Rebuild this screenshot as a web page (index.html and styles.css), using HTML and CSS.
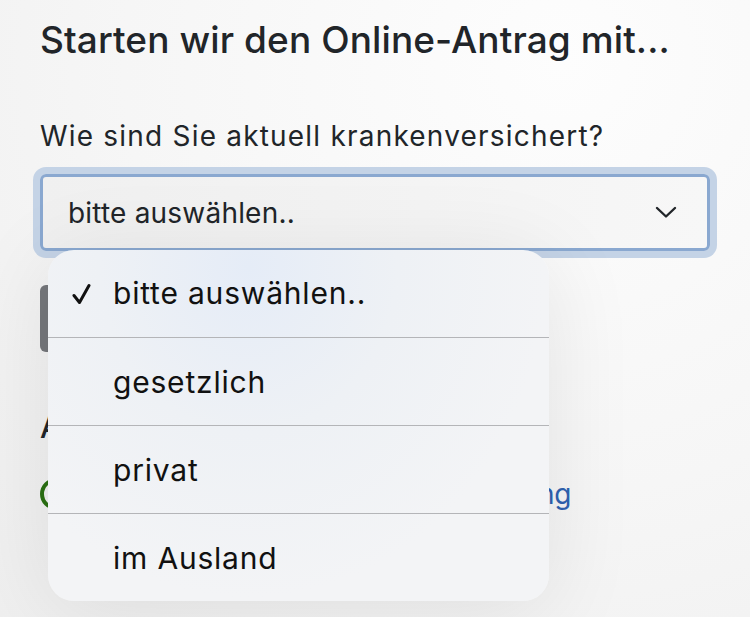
FILE: index.html
```html
<!DOCTYPE html>
<html lang="de">
<head>
    <meta charset="UTF-8">
    <title>Online-Antrag</title>
    <link rel="stylesheet" href="styles.css">
</head>
<body>
<div class="page">
    <h1 class="title">Starten wir den Online-Antrag mit...</h1>

    <div class="field">
        <label class="field-label" for="kv">Wie sind Sie aktuell krankenversichert?</label>
        <div class="select">
            <span class="select-value">bitte auswählen..</span>
            <svg class="chevron" width="22" height="13" viewBox="0 0 22 13">
                <path d="M2 2 L11 10.5 L20 2" fill="none" stroke="#212529" stroke-width="2.4" stroke-linecap="round" stroke-linejoin="round"/>
            </svg>
        </div>

        <!-- geöffnetes Auswahlmenü -->
        <ul class="picker">
            <li class="picker-item selected">
                <svg class="check" width="19" height="22" viewBox="0 0 19 22">
                    <path d="M2 12.5 L7.5 19.5 L17 2.5" fill="none" stroke="#111" stroke-width="3" stroke-linecap="round" stroke-linejoin="round"/>
                </svg>
                bitte auswählen..
            </li>
            <li class="picker-item">gesetzlich</li>
            <li class="picker-item">privat</li>
            <li class="picker-item">im Ausland</li>
        </ul>
    </div>

    <button class="btn">Weiter</button>

    <h2 class="subtitle">Alternativ</h2>

    <div class="help-row">
        <span class="help-icon"></span>
        <a class="help-link" href="#">Hier finden Sie die Infos zur Beratung</a>
    </div>
</div>
</body>
</html>
```

FILE: styles.css
```css
* {
    margin: 0;
    padding: 0;
    box-sizing: border-box;
}

body {
    font-family: Inter, "Liberation Sans", sans-serif;
    color: #212529;
    background: radial-gradient(ellipse at 75% 10%, #fdfdfd 0%, #f6f6f6 55%, #efefef 100%);
    height: 617px;
    overflow: hidden;
}

.page {
    padding: 14px 40px 0 40px;
}

.title {
    font-size: 37px;
    font-weight: 500;
    letter-spacing: 0.1px;
    line-height: 52px;
}

.field {
    position: relative;
    margin-top: 52px;
}

.field-label {
    display: block;
    font-size: 28px;
    line-height: 36px;
    letter-spacing: 1.2px;
    margin-bottom: 20px;
}

.select {
    width: 670px;
    height: 77px;
    border: 3px solid #8aa8d0;
    border-radius: 6px;
    box-shadow: 0 0 0 7px #c4d3e6;
    background: linear-gradient(90deg, #f0f0f0, #f7f7f7);
    display: flex;
    align-items: center;
    justify-content: space-between;
    padding: 0 30px 0 25px;
}

.select-value {
    font-size: 28px;
    letter-spacing: 0.2px;
}

.picker {
    position: absolute;
    left: 8px;
    top: 132px;
    width: 501px;
    list-style: none;
    border-radius: 26px;
    overflow: hidden;
    background: radial-gradient(ellipse at 40% 5%, #e5ecf7 0%, #eef1f5 35%, #f3f4f6 70%);
    box-shadow: 0 10px 90px rgba(0, 0, 0, 0.09);
    z-index: 2;
}

.picker-item {
    height: 88px;
    display: flex;
    align-items: center;
    padding-left: 65px;
    font-size: 30px;
    letter-spacing: 0.8px;
    color: #111;
    border-top: 1px solid #b4b5b8;
    position: relative;
}

.picker-item:first-child {
    border-top: none;
    height: 87px;
    padding-bottom: 2px;
}

.check {
    position: absolute;
    left: 24px;
    top: 33px;
}

.btn {
    display: block;
    margin-top: 34px;
    width: 160px;
    height: 67px;
    border: none;
    border-radius: 6px;
    background: #75777b;
    color: #fff;
    font-family: inherit;
    font-size: 22px;
}

.subtitle {
    margin-top: 56px;
    font-size: 30px;
    font-weight: 500;
    line-height: 38px;
}

.help-row {
    display: flex;
    align-items: center;
    gap: 12px;
    margin-top: 31px;
}

.help-icon {
    width: 32px;
    height: 32px;
    border: 4px solid #2a7012;
    border-radius: 50%;
}

.help-link {
    font-size: 28px;
    letter-spacing: -0.2px;
    color: #2f62b0;
    text-decoration: none;
    white-space: nowrap;
}
```
